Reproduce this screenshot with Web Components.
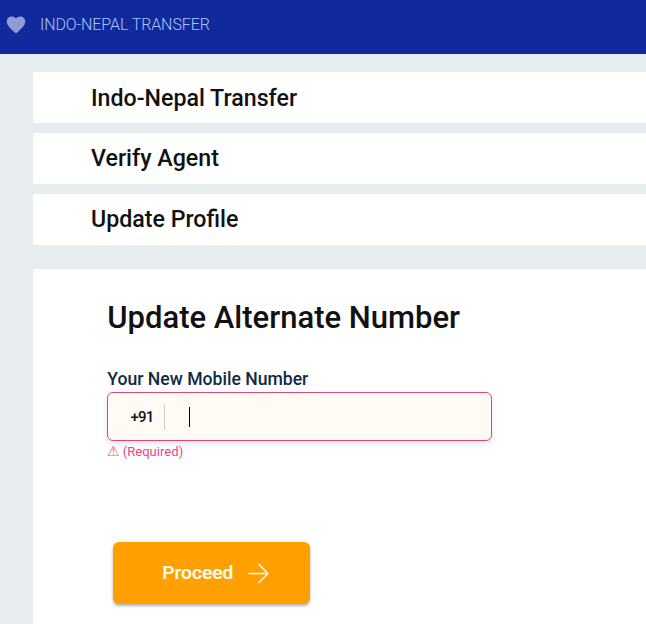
<!DOCTYPE html>
<html lang="en">
<head>
<meta charset="utf-8">
<title>Indo-Nepal Transfer</title>
<style>
html,body{margin:0;height:100%;overflow:hidden}
body{background:#e7ecee;font-family:Roboto,"Liberation Sans",sans-serif;color:#111}
</style>
</head>
<body>
<transfer-app></transfer-app>
<script>
const define=(name,html)=>customElements.define(name,class extends HTMLElement{
  constructor(){super();this.attachShadow({mode:"open"}).innerHTML=html;}
});
define("app-header",`<style>
:host{display:flex;align-items:center;height:54px;box-sizing:border-box;padding:0 0 5px 4px;background:#10299d;color:#a9c8f8;font-size:16px;letter-spacing:-.1px;font-weight:300;line-height:20px;white-space:nowrap}
svg{width:24px;height:24px;margin-right:12px;fill:#8f9bd2}
</style><svg viewBox="0 0 24 24"><path d="M12 20.6 10.7 19.4C5.4 14.7 2.8 12.1 2.8 8.6 2.8 5.6 5 3.6 7.7 3.6c1.7 0 3.3.8 4.3 2 1-1.2 2.6-2 4.3-2 2.7 0 4.9 2 4.9 5 0 3.5-2.6 6.1-7.9 10.8z"/></svg><slot></slot>`);
define("menu-row",`<style>
:host{display:flex;align-items:center;height:51px;box-sizing:border-box;padding:0 0 1px 58px;background:#fff;border-radius:2px 0 0 2px;font-size:23.2px;font-weight:500;line-height:28px;white-space:nowrap}
:host(:first-child){padding-bottom:0;padding-top:1px}
</style><slot></slot>`);
define("phone-field",`<style>
:host{display:block;width:385px}
.label{color:#102a43;font-size:17.6px;font-weight:500;line-height:24px;padding-left:.3px;white-space:nowrap}
.box{display:flex;align-items:center;height:49px;box-sizing:border-box;margin-top:1px;padding-left:22px;border:1px solid #d9477b;border-radius:6px;background:#fffaf3;box-shadow:0 3px 6px rgba(0,0,0,.1)}
.code{width:33.5px;padding-left:.5px;font-size:15px;font-weight:500;letter-spacing:-.8px;color:#111}
.line{width:1px;height:26px;background:#d3d0cc}
.caret{width:1px;height:20px;margin-left:24px;background:#000}
.error{height:20px;line-height:20px;color:#f0457f;font-size:13.1px;white-space:nowrap}
.warn{display:inline-block;width:15.7px;font-family:"DejaVu Sans",sans-serif;font-size:14px}
</style><div class="label"><slot></slot></div>
<div class="box"><span class="code">+91</span><span class="line"></span><span class="caret"></span></div>
<div class="error"><span class="warn">⚠</span>(Required)</div>`);
define("proceed-button",`<style>
:host{display:flex;align-items:center;width:197px;height:62px;box-sizing:border-box;padding:0 0 1px 49.3px;border-radius:6px;background:#ffa000;color:#fffdf2;box-shadow:0 2px 3px rgba(0,0,0,.3);font-size:19.2px;font-weight:500;line-height:24px;white-space:nowrap;-webkit-text-stroke:.2px currentColor}
svg{width:21px;height:21px;margin:2px 0 0 14.7px;fill:none;stroke:currentColor;stroke-width:1.5}
</style><slot></slot><svg viewBox="0 0 21 21"><path d="M.5 10.5H20M10.5 1 20 10.5 10.5 20"/></svg>`);
define("transfer-app",`<style>
:host{display:block}
nav{display:grid;gap:10px;padding:18px 0 0 33px}
main{height:355px;box-sizing:border-box;margin:24px 0 0 33px;padding:29px 0 0 74px;background:#fff;border-radius:2px 0 0 0}
h1{margin:0;padding-left:.3px;font-size:31px;font-weight:500;line-height:40px;white-space:nowrap}
phone-field{margin-top:29px}
proceed-button{margin:81px 0 0 6px}
</style><app-header>INDO-NEPAL TRANSFER</app-header>
<nav><menu-row>Indo-Nepal Transfer</menu-row><menu-row>Verify Agent</menu-row><menu-row>Update Profile</menu-row></nav>
<main><h1>Update Alternate Number</h1><phone-field>Your New Mobile Number</phone-field><proceed-button>Proceed</proceed-button></main>`);
</script>
</body>
</html>
